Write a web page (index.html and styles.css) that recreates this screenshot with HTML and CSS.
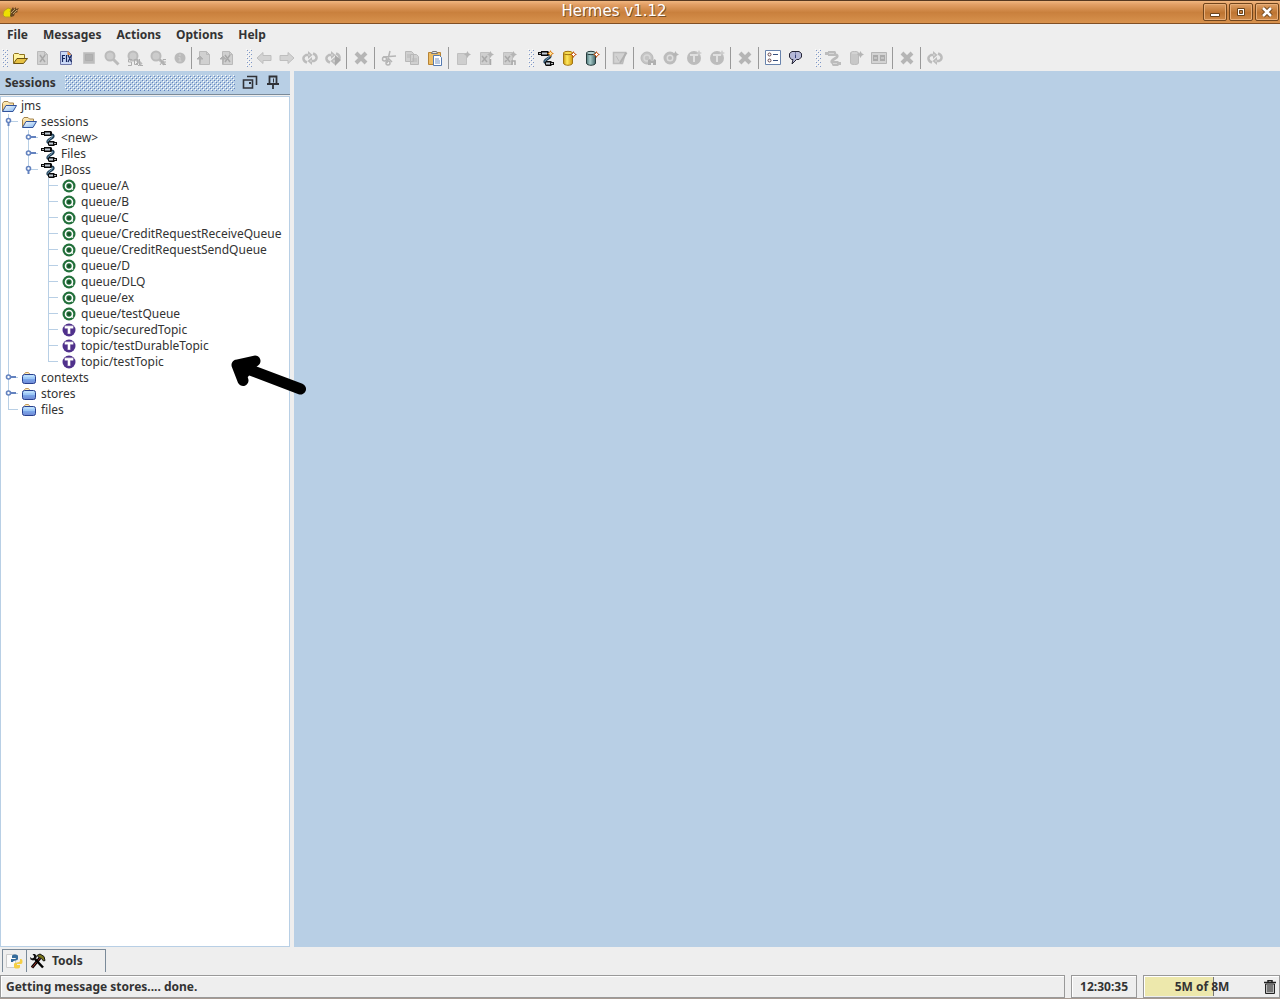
FILE: index.html
```html
<!DOCTYPE html>
<html lang="en">
<head>
<meta charset="utf-8">
<title>Hermes v1.12</title>
<link rel="stylesheet" href="styles.css">
</head>
<body>
<svg class="defs" aria-hidden="true">
  <defs>
    <linearGradient id="gOpen" x1="0" y1="0" x2="1" y2="1"><stop offset="0" stop-color="#fff"/><stop offset="1" stop-color="#7fb4ee"/></linearGradient>
    <linearGradient id="gManila" x1="0" y1="0" x2="0" y2="1"><stop offset="0" stop-color="#fff0bd"/><stop offset="1" stop-color="#eec075"/></linearGradient>
    <linearGradient id="gBlue" x1="0" y1="0" x2="0" y2="1"><stop offset="0" stop-color="#b5dcfc"/><stop offset=".5" stop-color="#98c3f5"/><stop offset=".55" stop-color="#7aa5e8"/><stop offset="1" stop-color="#7088d4"/></linearGradient>
    <linearGradient id="gGold" x1="0" y1="0" x2="1" y2="0"><stop offset="0" stop-color="#c99a12"/><stop offset=".4" stop-color="#ffe95e"/><stop offset="1" stop-color="#d29a10"/></linearGradient>
    <linearGradient id="gTeal" x1="0" y1="0" x2="1" y2="0"><stop offset="0" stop-color="#4d7778"/><stop offset=".4" stop-color="#a9cccb"/><stop offset="1" stop-color="#426668"/></linearGradient>
  </defs>
  <symbol id="folder-open" viewBox="0 0 16 16">
    <path d="M1.500 13V5.500L3 3.500h4l1.500 1.500h4V8" fill="url(#gManila)" stroke="#a2824c"/>
    <path d="M1.500 13.500L5 7.500h10.500l-3.500 6z" fill="url(#gOpen)" stroke="#31539c"/>
  </symbol>
  <symbol id="folder" viewBox="0 0 16 16">
    <path d="M3 4.500L4.500 2.500h3L9 4.500" fill="#fff0bd" stroke="#c49a60"/>
    <rect x="1.500" y="4.500" width="13" height="9" rx="2" fill="url(#gBlue)" stroke="#28408f"/>
    <path d="M3.500 6h9" stroke="#c9e8ff"/>
  </symbol>
  <symbol id="cable" viewBox="0 0 16 16">
    <path d="M9 4.500c4 0 4.500 2 1 4S5 12.500 9 13" fill="none" stroke="#1c3d56" stroke-width="2.600"/>
    <path d="M10 5c2.500.5 2 2-.5 3.500S6.500 11.500 8 12.500" fill="none" stroke="#8db4cc"/>
    <path d="M0 2h3V1h7l1 1v3l-1 1H3V5H0z" fill="#0b0b0b"/>
    <path d="M8 11h5l1 1h2v3h-2l-1 1H8l-1-1v-3z" fill="#0b0b0b"/>
    <path d="M4 3.500h5M8 13.500h4" stroke="#c2ccd6" stroke-width="2"/>
    <path d="M1 3.500h2M13 13.500h2" stroke="#b5b5b5"/>
  </symbol>
  <symbol id="queue" viewBox="0 0 14 14">
    <circle cx="7" cy="7" r="6.500" fill="#22703b"/>
    <circle cx="7" cy="7" r="3.500" fill="none" stroke="#fff" stroke-width="1.600"/>
    <path d="M9 9l2 1.500" stroke="#fff" stroke-width="1.500"/>
    <circle cx="7" cy="7" r="1.500" fill="#174d27"/>
  </symbol>
  <symbol id="topic" viewBox="0 0 14 14">
    <circle cx="7" cy="7" r="6.500" fill="#50318c"/>
    <path d="M2.500 2.500h9v3h-3v5.500h-3V5.500h-3z" fill="#b9aec9"/>
    <path d="M3 4.300h8M7 4v6.500" stroke="#fff" stroke-width="2"/>
  </symbol>
  <symbol id="handle-closed" viewBox="0 0 12 10"><path d="M5 5h6" stroke="#6382bf" stroke-width="2"/><circle cx="3.500" cy="5" r="2" fill="#fff" stroke="#6382bf" stroke-width="1.600"/></symbol>
  <symbol id="handle-open" viewBox="0 0 12 10"><path d="M3.500 6v4" stroke="#6382bf" stroke-width="2"/><circle cx="3.500" cy="4.500" r="2" fill="#fff" stroke="#6382bf" stroke-width="1.600"/></symbol>
  <symbol id="doc" viewBox="0 0 16 16"><path d="M2.500 1.500h7l3 3v10h-10z" fill="#d0d0d0" stroke="#bababa"/><path d="M9.500 1.500v3h3" fill="none" stroke="#bababa"/></symbol>
  <symbol id="doc-x" viewBox="0 0 16 16"><use href="#doc"/><path d="M5 5l5 7M10 5l-5 7" stroke="#a8a8a8" stroke-width="1.500"/></symbol>
  <symbol id="mag" viewBox="0 0 16 16"><circle cx="6" cy="6" r="4.500" fill="#ccc" stroke="#bbb" stroke-width="2"/><path d="M9.500 9.500l5 5" stroke="#bbb" stroke-width="3"/></symbol>
  <symbol id="star" viewBox="0 0 6 6"><path d="M3 0l1 2 2 1-2 1-1 2-1-2-2-1 2-1z"/></symbol>
  <symbol id="cross" viewBox="0 0 16 16"><path d="M3 3l10 10M13 3L3 13" stroke="#b5b5b5" stroke-width="4"/></symbol>
  <symbol id="cycle" viewBox="0 0 16 16"><path d="M5 12.500C1 11 0 7 4 5h3M11 3.500c4 1.500 5 5.500 1 7.500H9" fill="none" stroke="#bcbcbc" stroke-width="2.500"/><path d="M6 1l4.500 4L6 9zM10 7l-4.500 4 4.500 4z" fill="#bcbcbc"/><path d="M7 4v2M9 10v2" stroke="#ddd"/></symbol>
  <symbol id="disc-t" viewBox="0 0 16 16"><circle cx="8" cy="8" r="7" fill="#bcbcbc"/><path d="M4 5h8M8 5v7" stroke="#e0e0e0" stroke-width="2"/></symbol>
  <symbol id="cable-off" viewBox="0 0 16 16"><path d="M9 4.500c4 0 4.500 2 1 4S5 12.500 9 13" fill="none" stroke="#bcbcbc" stroke-width="2.600"/><path d="M0 2h3V1h7l1 1v3l-1 1H3V5H0zM8 11h5l1 1h2v3h-2l-1 1H8l-1-1v-3z" fill="#bcbcbc"/><path d="M4 3.500h5M8 13.500h4" stroke="#d6d6d6"/></symbol>
</svg>

<header class="titlebar">
  <svg class="app-icon" viewBox="0 0 18 14"><path d="M1 10l1-4 4-3 3 1-1 3 3 2-2 3H3z" fill="#eee000" stroke="#b99c22"/><path d="M8 11l1-6 2-3 1 2 2-2v2l3-1-2 3 1 1-3 1-1 3-3 1z" fill="#674621"/><path d="M9 8l4-4M11 9l4-4" stroke="#bca06a"/></svg>
  <h1 class="title">Hermes v1.12</h1>
  <div class="window-buttons">
    <button aria-label="Minimize"><svg viewBox="0 0 14 14"><path d="M2.500 8.500h9v3h-9z" fill="#fff" stroke="#6b441c"/></svg></button>
    <button aria-label="Maximize"><svg viewBox="0 0 14 14"><path d="M3.500 3.500h7v7h-7z" fill="#fff" stroke="#6b441c"/><path d="M5.500 5.500h3v3h-3z" fill="#c8803d" stroke="#6b441c"/></svg></button>
    <button aria-label="Close"><svg viewBox="0 0 14 14"><path d="M3 3l8 8M11 3l-8 8" stroke="#6b441c" stroke-width="4.500"/><path d="M3 3l8 8M11 3l-8 8" stroke="#fff" stroke-width="2.500"/></svg></button>
  </div>
</header>

<nav class="menubar" aria-label="Main menu">
  <button>File</button><button>Messages</button><button>Actions</button><button>Options</button><button>Help</button>
</nav>

<div class="toolbars">
  <div class="toolbar" role="toolbar" aria-label="File">
    <span class="grip"></span>
    <button aria-label="Open"><svg viewBox="0 0 16 16"><path d="M1.500 13V4.500l1-1h4l1 1h5V8" fill="#fff3a0" stroke="#8d7220"/><path d="M1.500 13.500L5 8.500h10.500l-4 5z" fill="#e7c143" stroke="#6c5310"/></svg></button>
    <button aria-label="Export XML"><svg><use href="#doc-x"/></svg></button>
    <button aria-label="FIX"><svg viewBox="0 0 16 16"><path d="M2.500 1.500h8l3 3v10h-11z" fill="#cbd9f7" stroke="#7078a8"/><path d="M9.500 1v4h4z" fill="#e79143"/><path d="M4.500 12V5.500H7M4.500 8.500H7M8.500 5v7M10 5l3.500 7M13.500 5L10 12" fill="none" stroke="#15265e" stroke-width="1.200"/></svg></button>
    <button aria-label="Stop"><svg viewBox="0 0 16 16"><path d="M2.500 2.500h11v11h-11z" fill="#bdbdbd" stroke="#c8c8c8"/><path d="M4.500 4.500h7v6h-7z" fill="#b2b2b2" stroke="#adadad"/></svg></button>
    <button aria-label="Search"><svg><use href="#mag"/></svg></button>
    <button aria-label="Search SQL"><svg viewBox="0 0 16 16"><use href="#mag"/><path d="M5 9.500H1.500v2.500h3v3.500H1M7.500 9.500h3v5h-3zM9 13l3 3M12.500 9v6.500H16" fill="none" stroke="#adadad"/></svg></button>
    <button aria-label="Search selector"><svg viewBox="0 0 16 16"><use href="#mag"/><path d="M10 9l2 3-2 3M16 9.500h-3v5h3M13 12h3" fill="none" stroke="#adadad"/></svg></button>
    <button aria-label="Information" class="narrow"><svg viewBox="0 0 16 16"><circle cx="8" cy="8" r="5.500" fill="#bbb"/><path d="M6.500 7.500H8V11M6.500 11h3M8 4v2" fill="none" stroke="#d2d2d2"/></svg></button>
    <span class="rule tight"></span>
    <button aria-label="Import"><svg viewBox="0 0 16 16"><use href="#doc" x="1"/><path d="M4 14V9H1l3-3 3 3H5" fill="#b0b0b0" stroke="#b0b0b0"/></svg></button>
    <button aria-label="Import XML"><svg viewBox="0 0 16 16"><use href="#doc-x" x="1"/><path d="M4 14V9H1l3-3 3 3H5" fill="#b0b0b0" stroke="#b0b0b0"/></svg></button>
  </div>
  <div class="toolbar" role="toolbar" aria-label="Edit">
    <span class="grip"></span>
    <button aria-label="Back"><svg viewBox="0 0 16 16"><path d="M1 8l6-5.500v3h8v5H7v3z" fill="#d3d3d3" stroke="#bebebe"/></svg></button>
    <button aria-label="Forward"><svg viewBox="0 0 16 16"><path d="M15 8L9 2.500v3H1v5h8v3z" fill="#d3d3d3" stroke="#bebebe"/></svg></button>
    <button aria-label="Refresh"><svg><use href="#cycle"/></svg></button>
    <button aria-label="Auto refresh"><svg viewBox="0 0 16 16"><use href="#cycle"/><path d="M10 5l6 5-6 6z" fill="#a9a9a9"/></svg></button>
    <span class="rule"></span>
    <button aria-label="Delete"><svg><use href="#cross"/></svg></button>
    <span class="rule"></span>
    <button aria-label="Cut"><svg viewBox="0 0 16 16"><path d="M2 7l13-1M6 13L9 1M7 8l4 4" stroke="#b5b5b5" stroke-width="1.500"/><circle cx="3.500" cy="9" r="2" fill="none" stroke="#b5b5b5" stroke-width="1.500"/><circle cx="7" cy="13" r="2" fill="none" stroke="#b5b5b5" stroke-width="1.500"/></svg></button>
    <button aria-label="Copy"><svg viewBox="0 0 16 16"><path d="M1.500 1.500h6l2 2v8h-8zM6.500 4.500h6l2 2v8h-8z" fill="#d0d0d0" stroke="#b8b8b8"/><path d="M3 5h3M3 7h3M8 9h5M8 11h5" stroke="#b8b8b8"/></svg></button>
    <button aria-label="Paste"><svg viewBox="0 0 16 16"><path d="M1.500 2.500h12v12h-12z" fill="#edbd65" stroke="#b68335"/><path d="M4.500 3.500l1-2h4l1 2z" fill="#e8e8e8" stroke="#777"/><path d="M6.500 5.500h6l2 2v8h-8z" fill="#fff" stroke="#557ab0"/><path d="M8 9h4M8 11h5M8 13h5" stroke="#7292c2"/></svg></button>
    <span class="rule"></span>
    <button aria-label="New message"><svg viewBox="0 0 16 16"><path d="M2.500 3.500h9v11h-9z" fill="#cecece" stroke="#c0c0c0"/><use href="#star" x="9" y="1" width="7" height="7" fill="#b5b5b5"/></svg></button>
    <button aria-label="Send one"><svg viewBox="0 0 16 16"><path d="M2.500 2.500h9v12h-9z" fill="#cecece" stroke="#c0c0c0"/><path d="M4 6l5 6M9 6l-5 6M12.500 9v6" stroke="#a9a9a9" stroke-width="1.500"/><use href="#star" x="9" y="1" width="7" height="7" fill="#b5b5b5"/></svg></button>
    <button aria-label="Send many"><svg viewBox="0 0 16 16"><path d="M2.500 2.500h9v12h-9z" fill="#cecece" stroke="#c0c0c0"/><path d="M4 6l5 6M9 6l-5 6M11 15v-4h3v4" fill="none" stroke="#a9a9a9" stroke-width="1.500"/><use href="#star" x="9" y="1" width="7" height="7" fill="#b5b5b5"/></svg></button>
  </div>
  <div class="toolbar" role="toolbar" aria-label="Sessions">
    <span class="grip"></span>
    <button aria-label="New session"><svg viewBox="0 0 16 16"><use href="#cable"/><use href="#star" x="9" y="0" width="7" height="7" fill="#df851d"/><path d="M11 3.500h3M12.500 2v3" stroke="#ffe29a"/></svg></button>
    <button aria-label="New queue"><svg viewBox="0 0 16 16"><path d="M2.500 3v10c0 3 9 3 9 0V3z" fill="url(#gGold)" stroke="#a17412"/><ellipse cx="7" cy="3" rx="4.500" ry="1.700" fill="#f6db50" stroke="#a17412"/><use href="#star" x="9" y="1" width="7" height="7" fill="#c65c1c"/><path d="M11 4.500h3M12.500 3v3" stroke="#fff"/></svg></button>
    <button aria-label="New store"><svg viewBox="0 0 16 16"><path d="M2.500 3v10c0 3 9 3 9 0V3z" fill="url(#gTeal)" stroke="#253b3c"/><ellipse cx="7" cy="3" rx="4.500" ry="1.700" fill="#b8d2d0" stroke="#253b3c"/><use href="#star" x="9" y="1" width="7" height="7" fill="#c65c1c"/><path d="M11 4.500h3M12.500 3v3" stroke="#fff"/></svg></button>
    <span class="rule"></span>
    <button aria-label="Edit"><svg viewBox="0 0 16 16"><path d="M1.500 2.500h12l-3 11h-9z" fill="#d2d2d2" stroke="#bbb" stroke-width="1.500"/><path d="M4 6l3 5" stroke="#bbb"/><path d="M14.500 2.500L8 13" stroke="#b0b0b0" stroke-width="2"/></svg></button>
    <span class="rule"></span>
    <button aria-label="Browse queue"><svg viewBox="0 0 16 16"><circle cx="7" cy="8" r="6" fill="#c4c4c4" stroke="#b9b9b9"/><circle cx="7" cy="8" r="3" fill="none" stroke="#d8d8d8" stroke-width="1.500"/><path d="M8 15v-5l2-1 1 2h2l1-2 2 1v5h-3v-2h-2v2z" fill="#b0b0b0"/></svg></button>
    <button aria-label="Add queue"><svg viewBox="0 0 16 16"><circle cx="7" cy="8" r="5" fill="#ddd" stroke="#bcbcbc" stroke-width="3"/><circle cx="7" cy="8" r="2" fill="#bcbcbc"/><use href="#star" x="9" y="1" width="7" height="7" fill="#b5b5b5"/></svg></button>
    <button aria-label="Add topic"><svg viewBox="0 0 16 16"><use href="#disc-t"/><use href="#star" x="10" y="0" width="6" height="6" fill="#ccc"/></svg></button>
    <button aria-label="Add durable topic"><svg viewBox="0 0 16 16"><use href="#disc-t"/><use href="#star" x="10" y="0" width="6" height="6" fill="#ccc"/></svg></button>
    <span class="rule"></span>
    <button aria-label="Remove"><svg><use href="#cross"/></svg></button>
    <span class="rule"></span>
    <button aria-label="Preferences"><svg viewBox="0 0 16 16"><path d="M.5.5h15v14H.5z" fill="#fff" stroke="#6883ac"/><path d="M8 4.500h5M8 10.500h5" stroke="#38507d"/><circle cx="4.500" cy="4.500" r="1.500" fill="#fff" stroke="#65444b"/><circle cx="4.500" cy="10.500" r="1.500" fill="#fff" stroke="#65444b"/></svg></button>
    <button aria-label="About"><svg viewBox="0 0 16 16"><path d="M4 1.500h7l2.500 2v3.500L11 9.500H8.500L4 14l1-4.500H3.500L1.500 7V3.500z" fill="#b6b9d7" stroke="#252536"/><path d="M7.500 4.500V8M7.500 2.500v1" stroke="#343d79"/></svg></button>
  </div>
  <div class="toolbar" role="toolbar" aria-label="Destinations">
    <span class="grip"></span>
    <button aria-label="Session"><svg><use href="#cable-off"/></svg></button>
    <button aria-label="Destination"><svg viewBox="0 0 16 16"><path d="M2.500 3v10c0 2 8 2 8 0V3c0-2-8-2-8 0z" fill="#c8c8c8" stroke="#bbb"/><path d="M4 3h5" stroke="#ddd"/><use href="#star" x="9" y="1" width="7" height="7" fill="#b5b5b5"/></svg></button>
    <button aria-label="Layout"><svg viewBox="0 0 16 16"><path d="M.5 2.500h15v11H.500z" fill="#d3d3d3" stroke="#b5b5b5"/><path d="M2 5h5v6H2zM9 5h5v6H9z" fill="#aaa"/><path d="M3 8h3M10 8h3" stroke="#ddd"/></svg></button>
    <span class="rule"></span>
    <button aria-label="Clear"><svg><use href="#cross"/></svg></button>
    <span class="rule"></span>
    <button aria-label="Reload"><svg><use href="#cycle"/></svg></button>
  </div>
</div>

<main class="workspace">
  <section class="sessions" aria-labelledby="sessions-title">
    <header class="panel-head">
      <h2 id="sessions-title">Sessions</h2>
      <span class="bumps"></span>
      <button aria-label="Float"><svg viewBox="0 0 16 16"><path d="M1.500 5h9v8h-9zM5 1.500h9.500V10" fill="none" stroke="#303237" stroke-width="1.600"/><path d="M8 7v2" stroke="#303237" stroke-width="2"/></svg></button>
      <button aria-label="Auto hide"><svg viewBox="0 0 16 16"><path d="M4.500 9V1.500h7V9M2 9h12M8 9.500V14" fill="none" stroke="#303237" stroke-width="1.800"/><path d="M8.500 3.500v4" stroke="#303237"/></svg></button>
    </header>
    <div class="tree-view">
      <ul class="tree">
        <li><div class="row"><svg class="icon"><use href="#folder-open"/></svg><span>jms</span></div>
          <ul>
            <li><div class="row"><button class="handle" aria-label="Collapse sessions"><svg><use href="#handle-open"/></svg></button><svg class="icon"><use href="#folder-open"/></svg><span>sessions</span></div>
              <ul>
                <li><div class="row"><button class="handle" aria-label="Expand new"><svg><use href="#handle-closed"/></svg></button><svg class="icon"><use href="#cable"/></svg><span>&lt;new&gt;</span></div></li>
                <li><div class="row"><button class="handle" aria-label="Expand Files"><svg><use href="#handle-closed"/></svg></button><svg class="icon"><use href="#cable"/></svg><span>Files</span></div></li>
                <li><div class="row"><button class="handle" aria-label="Collapse JBoss"><svg><use href="#handle-open"/></svg></button><svg class="icon"><use href="#cable"/></svg><span>JBoss</span></div>
                  <ul class="leaves">
                    <li><div class="row"><svg class="icon"><use href="#queue"/></svg><span>queue/A</span></div></li>
                    <li><div class="row"><svg class="icon"><use href="#queue"/></svg><span>queue/B</span></div></li>
                    <li><div class="row"><svg class="icon"><use href="#queue"/></svg><span>queue/C</span></div></li>
                    <li><div class="row"><svg class="icon"><use href="#queue"/></svg><span>queue/CreditRequestReceiveQueue</span></div></li>
                    <li><div class="row"><svg class="icon"><use href="#queue"/></svg><span>queue/CreditRequestSendQueue</span></div></li>
                    <li><div class="row"><svg class="icon"><use href="#queue"/></svg><span>queue/D</span></div></li>
                    <li><div class="row"><svg class="icon"><use href="#queue"/></svg><span>queue/DLQ</span></div></li>
                    <li><div class="row"><svg class="icon"><use href="#queue"/></svg><span>queue/ex</span></div></li>
                    <li><div class="row"><svg class="icon"><use href="#queue"/></svg><span>queue/testQueue</span></div></li>
                    <li><div class="row"><svg class="icon"><use href="#topic"/></svg><span>topic/securedTopic</span></div></li>
                    <li><div class="row"><svg class="icon"><use href="#topic"/></svg><span>topic/testDurableTopic</span></div></li>
                    <li><div class="row"><svg class="icon"><use href="#topic"/></svg><span>topic/testTopic</span></div></li>
                  </ul>
                </li>
              </ul>
            </li>
            <li><div class="row"><button class="handle" aria-label="Expand contexts"><svg><use href="#handle-closed"/></svg></button><svg class="icon"><use href="#folder"/></svg><span>contexts</span></div></li>
            <li><div class="row"><button class="handle" aria-label="Expand stores"><svg><use href="#handle-closed"/></svg></button><svg class="icon"><use href="#folder"/></svg><span>stores</span></div></li>
            <li><div class="row"><svg class="icon"><use href="#folder"/></svg><span>files</span></div></li>
          </ul>
        </li>
      </ul>
    </div>
  </section>
  <section class="desktop" aria-label="Desktop"></section>
  <svg class="pointer" viewBox="0 0 80 46" aria-hidden="true"><path d="M70.500 36L7 12M25 8L7 12M7 12L13 27.500" fill="none" stroke="#000" stroke-width="11" stroke-linecap="round"/><path d="M7 12L28 12L17 25z"/></svg>
</main>

<div class="dock-tabs">
  <button class="tab" aria-label="Python"><svg viewBox="0 0 18 18"><path d="M1.500 2.500h9v13h-9z" fill="#fafafa" stroke="#ccc"/><path d="M6 9V7h5V6H7V4c0-2 6-2 6 0v3c0 2-5 1-5 3H6z" fill="#356b9b"/><path d="M15 7h1c2 0 2 5 0 5h-4v1h3v2c0 2-6 2-6 0v-3c0-2 6-1 6-3z" fill="#f5cf45"/></svg></button>
  <button class="tab tools"><svg viewBox="0 0 18 18"><path d="M3 15.500L11 6" stroke="#000" stroke-width="3"/><path d="M3 15.500L11 6" stroke="#a53326"/><path d="M6 7l8 8.500" stroke="#000" stroke-width="2.500"/><path d="M1 5l2 1.500 2-1V4L3.500 2H6l2 2.500L6.500 7.500 4 8.500 1.500 7.500z" fill="#111"/><path d="M8 3.500L11 2l4 2.500 1 4-1.500.5-2-2.500-2-.5z" fill="#77731c" stroke="#111"/></svg>Tools</button>
</div>

<footer class="statusbar">
  <div class="status message">Getting message stores.... done.</div>
  <div class="status clock">12:30:35</div>
  <div class="status memory"><span class="used"></span><span class="amount">5M of 8M</span>
    <button aria-label="Collect garbage"><svg viewBox="0 0 12 14"><path d="M4 2V.5h4V2M0 2.500h12" fill="none" stroke="#222" stroke-width="1.500"/><path d="M1.500 4h9v9.500h-9z" fill="#bbb" stroke="#222"/><path d="M4 5v7M6 5v7M8 5v7" stroke="#333"/></svg></button>
  </div>
</footer>
</body>
</html>
```
FILE: styles.css
```css
* { box-sizing: border-box; }

body {
  display: flex;
  flex-direction: column;
  height: 100vh;
  margin: 0;
  overflow: hidden;
  background: #eee;
  color: #333;
  font: 12px/16px "Noto Sans", "Open Sans", sans-serif;
}

button {
  display: flex;
  align-items: center;
  padding: 0;
  border: 0;
  background: none;
  color: inherit;
  font: inherit;
}

h1, h2, ul { margin: 0; padding: 0; }
ul { list-style: none; }
svg { display: block; flex: none; }
.defs { position: absolute; width: 0; height: 0; }

/* Title bar */
.titlebar {
  display: grid;
  grid-template-columns: 80px 1fr 80px;
  align-items: center;
  flex: none;
  height: 24px;
  padding-right: 1px;
  border-top: 1px solid #563820;
  border-bottom: 1px solid #804f25;
  background: linear-gradient(#f0b781, #e3a066 15%, #c9803d 52%, #d8924d);
}
.app-icon { width: 18px; height: 14px; margin-left: 2px; }
.title {
  color: #fff;
  font: 15px/20px "DejaVu Sans", sans-serif;
  text-align: center;
  padding: 0 51px 2px 0;
  text-shadow: 1px 1px #7d5027;
}
.window-buttons { display: flex; gap: 2px; justify-content: flex-end; }
.window-buttons button {
  justify-content: center;
  width: 24px;
  height: 18px;
  border: 1px solid #71451c;
  border-radius: 2px;
  box-shadow: inset 0 0 0 1px #e8ae78;
  background: linear-gradient(#dfa066, #bd7431 55%, #cf8a48);
}
.window-buttons svg { width: 14px; height: 14px; }

/* Menus */
.menubar {
  display: flex;
  gap: 15px;
  flex: none;
  height: 22px;
  padding: 0 7px;
  font-weight: 700;
}

/* Toolbars */
.toolbars { display: flex; flex: none; height: 25px; padding: 0 0 2px 2px; }
.toolbar { display: flex; align-items: center; padding-right: 8px; }
.toolbar button { justify-content: center; width: 23px; height: 22px; }
.toolbar button.narrow { width: 22px; }
.toolbar svg { width: 16px; height: 16px; }
.rule { width: 1px; height: 22px; margin: 0 2px; background: #999; }
.rule.tight { margin: 0; }

.grip, .bumps {
  background-image:
    conic-gradient(at 1px 1px, transparent 75%, #fff 0),
    conic-gradient(at 1px 1px, transparent 75%, #fff 0),
    conic-gradient(at 1px 1px, transparent 75%, #6382bf 0),
    conic-gradient(at 1px 1px, transparent 75%, #6382bf 0);
  background-size: 4px 4px;
  background-position: 0 0, 2px 2px, 1px 1px, 3px 3px;
}
.grip { width: 6px; height: 18px; opacity: .8; }

/* Workspace */
.workspace {
  position: relative;
  display: flex;
  gap: 4px;
  flex: 1;
  min-height: 0;
}
.sessions { display: flex; flex-direction: column; flex: none; width: 290px; }
.desktop { flex: 1; background: #b8cfe5; }

.panel-head {
  display: flex;
  align-items: center;
  height: 24px;
  padding: 0 6px 0 5px;
  border-bottom: 1px solid #7a8a99;
  background: #b8cfe5;
}
.panel-head h2 { font-size: 12px; line-height: 16px; }
.bumps { flex: 1; height: 16px; margin: 0 3px 0 9px; }
.panel-head button { justify-content: center; width: 23px; }
.panel-head svg { width: 16px; height: 16px; }

.tree-view {
  flex: 1;
  min-height: 0;
  margin-top: 1px;
  padding-top: 1px;
  border: 1px solid #b8cfe5;
  background: #fff;
  white-space: nowrap;
}
.tree ul { padding-left: 20px; }
.tree li { position: relative; }
.row { display: flex; align-items: center; gap: 4px; height: 16px; }
.icon { width: 16px; height: 16px; }
.leaves .icon { width: 14px; height: 14px; margin: 0 1px; }

/* Branch lines joining each item to its parent */
.tree ul > li::before {
  content: "";
  position: absolute;
  top: 0;
  left: -13px;
  height: 100%;
  border-left: 1px solid #b8cfe5;
}
.tree ul > li:last-child::before { height: 8px; }
.tree ul > li::after {
  content: "";
  position: absolute;
  top: 7px;
  left: -13px;
  width: 10px;
  border-top: 1px solid #b8cfe5;
}
.handle { position: absolute; z-index: 1; top: 2px; left: -16px; }
.handle svg { width: 12px; height: 10px; }

.pointer { position: absolute; top: 282px; left: 230px; width: 80px; height: 46px; }

/* Docked tabs */
.dock-tabs { display: flex; flex: none; height: 28px; padding: 2px 2px 3px; }
.tab {
  gap: 5px;
  padding: 0 3px 0 2px;
  border: 1px solid #7a8a99;
  border-width: 1px 0 0 1px;
  font-weight: 700;
}
.tab svg { width: 18px; height: 18px; }
.tools { padding-right: 22px; border-right-width: 1px; }

/* Status bar */
.statusbar {
  display: flex;
  gap: 6px;
  flex: none;
  height: 24px;
  border-bottom: 1px solid #a79a92;
  font-weight: 700;
}
.status {
  display: flex;
  align-items: center;
  border: 1px solid #999;
  box-shadow: inset 1px 1px #fff;
}
.message { flex: 1; padding-left: 5px; }
.clock { padding: 0 8px; }
.memory { position: relative; width: 137px; justify-content: center; padding-right: 19px; }
.used {
  position: absolute;
  inset: 1px auto 1px 1px;
  width: 51%;
  border-right: 1px solid #777;
  background: #ede8ac;
}
.amount { position: relative; }
.memory button { position: absolute; right: 3px; }
.memory svg { width: 12px; height: 14px; }
```
